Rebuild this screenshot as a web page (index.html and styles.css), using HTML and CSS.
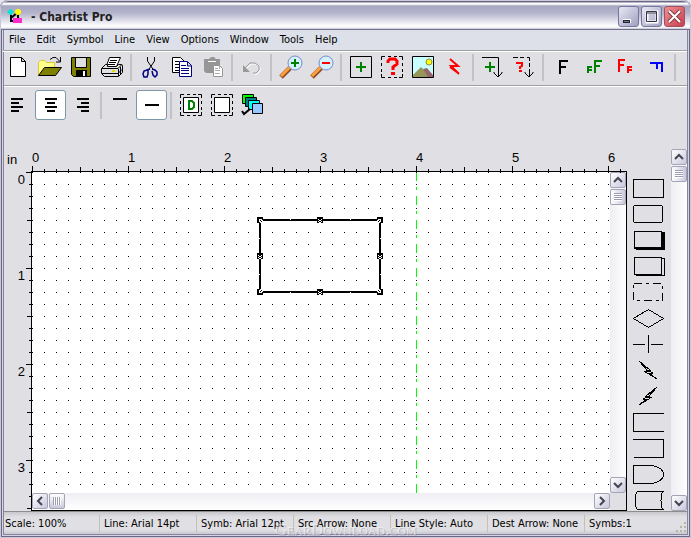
FILE: index.html
```html
<!DOCTYPE html>
<html lang="en">
<head>
    <meta charset="UTF-8">
    <meta name="viewport" content="width=device-width, initial-scale=1.0">
    <title>Chartist Pro</title>
    <link rel="stylesheet" href="styles.css">
</head>
<body>
    <div class="window">
        <header class="titlebar">
            <svg class="logo" width="16" height="16" viewBox="0 0 16 16">
                <path d="M4 6v6h4M4 9l6-5M11 5v5" stroke="#000" stroke-width="2" fill="none"/>
                <path d="M3 0h1l3 3-3 3H3L0 3z" fill="#00e6d2"/>
                <circle cx="11" cy="3" r="3" fill="#ff0"/>
                <rect x="6" y="9" width="9" height="5" fill="#ff28c8"/>
            </svg>
            <h1>- Chartist Pro</h1>
            <div class="window-buttons">
                <button aria-label="Minimize"><svg width="19" height="19"><path d="M4 12h8v4H4z" fill="#fff"/><path d="M4 13h7v3H4z" fill="#223"/><path d="M5 14h5v1H5z" fill="#778"/></svg></button>
                <button aria-label="Maximize"><svg width="19" height="19"><path d="M5 5h10v10H5z" fill="none" stroke="#fff" stroke-width="3"/><path d="M4.500 4.500h10v10h-10zM4 6h11" fill="none" stroke="#334"/></svg></button>
                <button class="close" aria-label="Close"><svg width="19" height="19"><path d="M4 4l11 11M15 4L4 15" stroke="#823c46" stroke-width="4"/><path d="M4 4l11 11M15 4L4 15" stroke="#fff" stroke-width="2"/></svg></button>
            </div>
        </header>
        <nav class="menu">
            <a href="#">File</a>
            <a href="#">Edit</a>
            <a href="#">Symbol</a>
            <a href="#">Line</a>
            <a href="#">View</a>
            <a href="#">Options</a>
            <a href="#">Window</a>
            <a href="#">Tools</a>
            <a href="#">Help</a>
        </nav>
        <div class="toolbar main-tools">
            <button aria-label="New"><svg width="24" height="24"><path d="M3.500 2.500h11l4 4v15h-15zM14.500 2.500v4h4" fill="#fff" stroke="#000"/></svg></button>
            <button aria-label="Open"><svg width="24" height="24"><path d="M.5 20.500v-13l2-2h4l2 2h8v5" fill="#ffff8c" stroke="#dcc832"/><path d="M.5 20.500l6-8h17l-6 8z" fill="#808000" stroke="#000"/><path d="M12 4.500l3-2h3l4 4M22.500 2v5H18" fill="none" stroke="#000"/></svg></button>
            <button aria-label="Save"><svg width="24" height="24"><path d="M2.500 2.500h19v19h-17l-2-2z" fill="#808000" stroke="#000"/><path d="M6.500 2.500h11v10h-11z" fill="#e0dfe3" stroke="#000"/><path d="M7 15h11v6H7z"/><path d="M14 16h2v5h-2z" fill="#fff"/></svg></button>
            <button aria-label="Print"><svg width="24" height="24"><path d="M6.500 10.500l3-8h11l-4 9" fill="#fff" stroke="#000"/><path d="M10 5.500h7M9 7.500h7M8 9.500h7" stroke="#000"/><path d="M1.500 13.500l4-4h2v2h9l2-2h3l1 1v7l-4 4h-14l-3-3z" fill="#e0dfe3" stroke="#000"/><path d="M2 13.500h16l4-4M2 18.500h16l4-4M18.500 14v7M20.500 12v7" fill="none" stroke="#000"/><path d="M12 16h3" stroke="#dcdc00" stroke-width="2"/></svg></button>
            <span class="divider"></span>
            <button aria-label="Cut"><svg width="24" height="24"><path d="M8.500 2v4l6 9M15.500 2v4l-6 9" fill="none" stroke="#000"/><path d="M11 14l-3 1-3 1-1 3 1 3h3l1-3v-4M13 14l3 1 2 2v3l-2 2-2-2-1-4" fill="none" stroke="#000080" stroke-width="1.500"/></svg></button>
            <button aria-label="Copy"><svg width="24" height="24"><path d="M2.500 2.500h8l4 4v11h-12z" fill="#fff" stroke="#000"/><path d="M5 6.500h4M5 9.500h4M5 12.500h4M5 15.500h4" stroke="#000"/><path d="M9.500 6.500h8l4 4v11h-12zM17.500 7v4h4" fill="#fff" stroke="#000080"/><path d="M11 10.500h5M11 13.500h8M11 15.500h8M11 18.500h8" stroke="#000080"/></svg></button>
            <button aria-label="Paste" disabled><svg width="24" height="24"><path d="M3 4h5l2-2h3l2 2h4v14H5l-2-2z" fill="#969696"/><path d="M7 6.500h8" stroke="#fff"/><path d="M12.500 10.500h6l3 3v8h-9z" fill="#fff" stroke="#969696"/><path d="M14 13.500h3M14 15.500h5M14 18.500h5M18.500 11v3" stroke="#aaa"/></svg></button>
            <span class="divider"></span>
            <button aria-label="Undo" disabled><svg width="24" height="24"><path d="M6 14l5-5h5l4 3v4l-3 3h-3" fill="none" stroke="#fff"/><path d="M5 13l5-5h5l4 3v4l-3 3h-3" fill="none" stroke="#999"/><path d="M3 10l7 7H3z" fill="#999"/></svg></button>
            <span class="divider"></span>
            <button aria-label="Zoom in"><svg width="24" height="24"><path d="M2 22l9-9" stroke="#8c5028" stroke-width="5"/><path d="M2 21l9-9" stroke="#ffa03c" stroke-width="3"/><circle cx="16" cy="8" r="7" fill="#d2f0ff" stroke="#788cc8"/><path d="M12 8h8M16 4v8" stroke="#008000" stroke-width="2"/></svg></button>
            <button aria-label="Zoom out"><svg width="24" height="24"><path d="M2 22l9-9" stroke="#8c5028" stroke-width="5"/><path d="M2 21l9-9" stroke="#ffa03c" stroke-width="3"/><circle cx="16" cy="8" r="7" fill="#d2f0ff" stroke="#788cc8"/><path d="M12 8h8" stroke="#f00" stroke-width="2"/></svg></button>
            <span class="divider"></span>
            <button aria-label="Add symbol"><svg width="24" height="24"><path d="M1.500 1.500h21v21h-21z" fill="none" stroke="#000"/><path d="M7 12h10M12 7v10" stroke="#008000" stroke-width="2"/></svg></button>
            <button aria-label="Select symbol"><svg width="24" height="24"><path d="M1.500 5V1.500H5M8 1.500h3M14 1.500h3M19 1.500h3.500V5M22.500 8v3M22.500 14v3M22.500 19v3.500H19M8 22.500h3M14 22.500h3M5 22.500H1.500V19M1.500 8v3M1.500 14v3" fill="none" stroke="#000"/><path d="M8 8V6l2-2h5l2 2v3l-4 3v3" fill="none" stroke="#f00" stroke-width="3"/><path d="M11 17h4v3h-4z" fill="#f00"/></svg></button>
            <button aria-label="Picture"><svg width="24" height="24"><path d="M1.500 1.500h21v21h-21z" fill="#c8ffff" stroke="#000"/><path d="M2 22v-2l8-8 5 5 3 5z" fill="#96965a"/><path d="M12 14l4-1 6 7v2h-5z" fill="#96646e"/><circle cx="18" cy="7" r="3" fill="#ff0" stroke="#8c8c50"/></svg></button>
            <button aria-label="Lightning"><svg width="24" height="24"><path d="M8 4l8 7H9l8 8M8 12l8 6" fill="none" stroke="#f00" stroke-width="2"/></svg></button>
            <span class="divider"></span>
            <button aria-label="Add line"><svg width="24" height="24"><path d="M1 2.500h16.500V22M13 17v1l4 4 4-4v-1" fill="none" stroke="#000"/><path d="M4 12h10M9 7v10" stroke="#008000" stroke-width="2"/></svg></button>
            <button aria-label="Select line"><svg width="24" height="24"><path d="M1 2.500h5M8 2.500h4M15 2.500h2.500V6M17.500 8v4M17.500 14v8M13 17v1l4 4 4-4v-1" fill="none" stroke="#000"/><path d="M5 9V8h5v3l-2 1v2M7 16h3" fill="none" stroke="#f00" stroke-width="2"/></svg></button>
            <span class="divider"></span>
            <button aria-label="Font"><svg width="24" height="24"><path d="M9 19V6h8M9 12h6" fill="none" stroke="#000" stroke-width="2"/></svg></button>
            <button aria-label="Larger font"><svg width="24" height="24"><path d="M13 18V6h7M13 11h5M6 18v-6h4M6 15h4" fill="none" stroke="#008000" stroke-width="2"/></svg></button>
            <button aria-label="Smaller font"><svg width="24" height="24"><path d="M6 17V5h6M6 10h5M15 18v-6h4M15 15h4" fill="none" stroke="#f00" stroke-width="2"/></svg></button>
            <button aria-label="Rotate font"><svg width="24" height="24"><path d="M6 8h12v9M13 8v6" fill="none" stroke="#00f" stroke-width="2"/></svg></button>
            <span class="divider"></span>
        </div>
        <div class="toolbar format-tools">
            <button aria-label="Align left"><svg width="24" height="24"><path d="M3 6h12M3 10h8M3 14h12M3 18h8" stroke="#000" stroke-width="2"/></svg></button>
            <button class="active" aria-label="Align center"><svg width="24" height="24"><path d="M6 6h12M8 10h8M6 14h12M8 18h8" stroke="#000" stroke-width="2"/></svg></button>
            <button aria-label="Align right"><svg width="24" height="24"><path d="M7 6h12M11 10h8M7 14h12M11 18h8" stroke="#000" stroke-width="2"/></svg></button>
            <span class="divider"></span>
            <button aria-label="Align top"><svg width="24" height="24"><path d="M4 6h14" stroke="#000" stroke-width="2"/></svg></button>
            <button class="active" aria-label="Align middle"><svg width="24" height="24"><path d="M5 12h14" stroke="#000" stroke-width="2"/></svg></button>
            <span class="divider"></span>
            <button aria-label="Default symbol"><svg width="24" height="24"><path d="M1.500 5V1.500H5M8 1.500h3M14 1.500h3M19 1.500h3.500V5M22.500 8v3M22.500 14v3M22.500 19v3.500H19M8 22.500h3M14 22.500h3M5 22.500H1.500V19M1.500 8v3M1.500 14v3" fill="none" stroke="#000"/><path d="M4.500 4.500h15v15h-15z" fill="#fff" stroke="#000"/><path d="M10 8h3l2 2v4l-2 2h-3z" fill="none" stroke="#008000" stroke-width="2"/></svg></button>
            <button aria-label="Blank symbol"><svg width="24" height="24"><path d="M1.500 5V1.500H5M8 1.500h3M14 1.500h3M19 1.500h3.500V5M22.500 8v3M22.500 14v3M22.500 19v3.500H19M8 22.500h3M14 22.500h3M5 22.500H1.500V19M1.500 8v3M1.500 14v3" fill="none" stroke="#000"/><path d="M4.500 4.500h15v15h-15z" fill="#fff" stroke="#000"/></svg></button>
            <button aria-label="Color scheme"><svg width="24" height="24"><g stroke="#000"><path d="M1.500 1.500h11v9h-11z" fill="#0f0"/><path d="M4.500 4.500h11v9h-11z" fill="#008080"/><path d="M7.500 7.500h11v9h-11z" fill="#0ff"/><path d="M11.500 10.500h10v10h-10z" fill="#96c8ff"/></g><path d="M1 18l2 3 6-5" fill="none" stroke="#000" stroke-width="2"/></svg></button>
        </div>
        <main class="workspace">
            <div class="sheet">
                <div class="unit">in</div>
                <div class="ruler-top">
                    <div class="numbers"><span>0</span><span>1</span><span>2</span><span>3</span><span>4</span><span>5</span><span>6</span></div>
                    <svg width="100%" height="7">
                        <pattern id="inch" width="96" height="7" patternUnits="userSpaceOnUse">
                            <path d="M.5 0v7M12.500 3v4M24.500 3v4M36.500 3v4M48.500 1v6M60.500 3v4M72.500 3v4M84.500 3v4" stroke="#000"/>
                        </pattern>
                        <rect width="100%" height="7" fill="url(#inch)"/>
                    </svg>
                </div>
                <div class="ruler-left">
                    <div class="numbers"><span>0</span><span>1</span><span>2</span><span>3</span></div>
                    <svg width="6" height="100%">
                        <pattern id="inch-down" width="6" height="96" patternUnits="userSpaceOnUse">
                            <path d="M0 .5h6M3 12.500h3M3 24.500h3M3 36.500h3M1 48.500h5M3 60.500h3M3 72.500h3M3 84.500h3" stroke="#000"/>
                        </pattern>
                        <rect width="6" height="100%" fill="url(#inch-down)"/>
                    </svg>
                </div>
                <div class="view">
                    <svg class="drawing" width="100%" height="100%" shape-rendering="crispEdges">
                        <defs>
                            <pattern id="dots" width="12" height="12" patternUnits="userSpaceOnUse">
                                <rect width="1" height="1"/>
                            </pattern>
                            <g id="corner">
                                <path d="M-3-3h6v2H0v1h-1v3h-2z"/>
                                <path d="M-1-1h4v4h-4z" fill="#fff"/>
                                <path d="M0 0h1v1H0zM1 1h1v1H1zM2-1h1v1H2zM-1 2h1v1h-1z"/>
                            </g>
                            <g id="middle">
                                <path d="M-3-3h6v6h-6z"/>
                                <path d="M-2-1h1v1h-1zM1-1h1v1H1zM-1 0h2v1h-2zM-2 1h1v1h-1zM1 1h1v1H1zM-1 2h2v1h-2z" fill="#fff"/>
                            </g>
                        </defs>
                        <rect width="100%" height="100%" fill="url(#dots)"/>
                        <path d="M384.500 0v2000" stroke="#0f0" stroke-dasharray="9 6 3 6"/>
                        <rect x="228" y="48" width="120" height="72" fill="none" stroke="#000" stroke-width="2"/>
                        <path d="M258.500 47v1M318.500 47v1M258.500 120v1M318.500 120v1M227 66.500h1M227 102.500h1M348 66.500h1M348 102.500h1" stroke="#fff"/>
                        <use href="#corner" x="228" y="48"/>
                        <use href="#corner" transform="translate(348 48) scale(-1 1)"/>
                        <use href="#corner" transform="translate(228 120) scale(1 -1)"/>
                        <use href="#corner" transform="translate(348 120) scale(-1 -1)"/>
                        <use href="#middle" x="288" y="48"/>
                        <use href="#middle" x="288" y="120"/>
                        <use href="#middle" x="228" y="84"/>
                        <use href="#middle" x="348" y="84"/>
                    </svg>
                    <div class="scroll down">
                        <button aria-label="Scroll up"><svg width="10" height="8"><path d="M1 6l4-4 4 4" fill="none" stroke="#445" stroke-width="2"/></svg></button>
                        <span class="thumb"></span>
                        <button class="end" aria-label="Scroll down"><svg width="10" height="8"><path d="M1 2l4 4 4-4" fill="none" stroke="#445" stroke-width="2"/></svg></button>
                    </div>
                    <div class="scroll across">
                        <button aria-label="Scroll left"><svg width="8" height="10"><path d="M6 1L2 5l4 4" fill="none" stroke="#445" stroke-width="2"/></svg></button>
                        <span class="thumb"></span>
                        <button class="end" aria-label="Scroll right"><svg width="8" height="10"><path d="M2 1l4 4-4 4" fill="none" stroke="#445" stroke-width="2"/></svg></button>
                    </div>
                </div>
            </div>
            <div class="palette">
                <button aria-label="Rectangle"><svg width="34" height="20"><path d="M1.500 1.500h30v18h-30z"/></svg></button>
                <button aria-label="Rounded rectangle"><svg width="34" height="20"><rect x="1.500" y="1.500" width="29" height="17" rx="2"/></svg></button>
                <button aria-label="Shadowed rectangle"><svg width="34" height="20"><path d="M2 1h28v1h3v18H4v-1H2z" fill="#000" stroke="none"/><path d="M3 2h26v15H3z" fill="#e0dfe3" stroke="none"/></svg></button>
                <button aria-label="Stacked rectangle"><svg width="34" height="20"><path d="M2.500 1.500h27v17h-27zM30 2.500h2.500v17h-28V18"/></svg></button>
                <button aria-label="Dashed rectangle"><svg width="34" height="20"><path d="M1.500 1.500h29v17h-29z" stroke-dasharray="8 4 3 4"/></svg></button>
                <button aria-label="Diamond"><svg width="34" height="20"><path d="M1.500 10.500l15-9 15 9-15 9z"/></svg></button>
                <button aria-label="Cross"><svg width="34" height="20"><path d="M1 10.500h12M19 10.500h12M16.500 1v18"/></svg></button>
                <button aria-label="Bolt down"><svg width="34" height="20"><path d="M7 1l11 9h-4l7 3h-4l8 6-13-8h4z"/></svg></button>
                <button aria-label="Bolt up"><svg width="34" height="20"><path d="M25 1l-11 9h4l-7 3h4l-8 6 13-8h-4z"/></svg></button>
                <button aria-label="Open right"><svg width="34" height="20"><path d="M32 1.500H1.500v18H32"/></svg></button>
                <button aria-label="Open left"><svg width="34" height="20"><path d="M1 1.500h30.500v18H2"/></svg></button>
                <button aria-label="Delay"><svg width="34" height="20"><path d="M1.500 1.500h17c7 0 13 4 13 9s-6 9-13 9h-17z"/></svg></button>
                <button aria-label="Storage"><svg width="34" height="20"><path d="M32 1.500H5.500c-3 3-3 15 0 18H32M30.500 2c-2 3-2 14 0 17"/></svg></button>
            </div>
            <div class="scroll down outer">
                <button aria-label="Palette up"><svg width="10" height="8"><path d="M1 6l4-4 4 4" fill="none" stroke="#445" stroke-width="2"/></svg></button>
                <span class="thumb"></span>
                <button class="end" aria-label="Palette down"><svg width="10" height="8"><path d="M1 2l4 4 4-4" fill="none" stroke="#445" stroke-width="2"/></svg></button>
            </div>
        </main>
        <footer class="status">
            <span>Scale: 100%</span>
            <span>Line: Arial 14pt</span>
            <span>Symb: Arial 12pt</span>
            <span>Src Arrow: None</span>
            <span>Line Style: Auto</span>
            <span>Dest Arrow: None</span>
            <span>Symbs:1</span>
            <svg class="grip" width="12" height="12"><path d="M9 1h2v2H9zM5 5h2v2H5zM9 5h2v2H9zM1 9h2v2H1zM5 9h2v2H5zM9 9h2v2H9z" fill="#b8b4a2"/></svg>
        </footer>
        <div class="watermark">GearDownload.com</div>
    </div>
</body>
</html>
```
FILE: styles.css
```css
* {
    box-sizing: border-box;
}
body {
    margin: 0;
    background-color: #e8e8f0;
    color: #000;
    font-family: "DejaVu Sans Condensed", "DejaVu Sans", sans-serif;
    font-size: 11px;
}
svg {
    display: block;
    flex-shrink: 0;
}
button {
    display: flex;
    align-items: center;
    justify-content: center;
    margin: 0;
    padding: 0;
    border: none;
    background: none;
}
.window {
    position: relative;
    display: flex;
    flex-direction: column;
    height: 100vh;
    min-height: 400px;
    padding: 0 4px 4px;
    border-radius: 8px 8px 0 0;
    background-color: #e0dfe3;
    box-shadow: inset 0 0 0 1px #c8c8d8, inset 0 0 0 2px #6c6884, inset 0 0 0 3px #d4d4e4, inset 0 0 0 4px #8884a0;
}

/* title bar and menu */
.titlebar {
    display: flex;
    align-items: center;
    flex-shrink: 0;
    height: 30px;
    margin: 0 -3px;
    padding: 3px 5px 0 6px;
    border-top: 1px solid #c8c8d8;
    border-bottom: 1px solid #74708c;
    border-radius: 8px 8px 0 0;
    background: linear-gradient(#6c6884 1px, #fff 2px, #fff 3px, #a6a6c2 5px, #b4b4cc 12px, #f8f8fc 24px, #fff 26px, #c4c4d8 28px);
}
.titlebar h1 {
    flex: 1;
    margin: 0 0 0 8px;
    color: #222;
    font-size: 12px;
}
.window-buttons {
    display: flex;
    gap: 2px;
}
.window-buttons button {
    width: 21px;
    height: 21px;
    border: 1px solid #74789c;
    border-radius: 3px;
    background: linear-gradient(135deg, #e8e8f4, #a0a0c0);
}
.window-buttons .close {
    border-color: #a05060;
    background: linear-gradient(135deg, #f09090, #c84050);
}
.menu {
    display: flex;
    align-items: center;
    flex-shrink: 0;
    gap: 11px;
    height: 20px;
    padding: 0 5px 2px;
    background-color: #dde0e9;
}
.menu a {
    color: #000;
    text-decoration: none;
}

/* toolbars */
.toolbar {
    display: flex;
    align-items: center;
    flex-shrink: 0;
    height: 35px;
    border-top: 1px solid #a0a0a0;
    box-shadow: inset 0 1px #fff;
}
.toolbar button {
    width: 31px;
    height: 30px;
    border-radius: 3px;
}
.toolbar .active {
    border: 1px solid #7c98a8;
    background-color: #fff;
}
.toolbar .divider {
    width: 2px;
    height: 27px;
    margin: 0 3px;
    background-color: #c2c1c6;
}
.main-tools {
    margin-left: -1px;
    padding-bottom: 2px;
}
.format-tools {
    height: 39px;
}

/* drawing area */
.workspace {
    display: flex;
    flex: 1;
    min-height: 0;
}
.sheet {
    display: grid;
    grid-template-columns: 27px minmax(0, 1fr);
    grid-template-rows: 47px minmax(0, 1fr);
    flex: 1;
    min-width: 0;
    font-family: "Liberation Sans", sans-serif;
    font-size: 13px;
    line-height: 16px;
}
.unit {
    padding: 28px 0 0 3px;
}
.ruler-top {
    position: relative;
    display: flex;
    flex-direction: column;
    justify-content: flex-end;
    margin-bottom: -2px;
    padding-left: 1px;
}
.ruler-top .numbers {
    display: flex;
    overflow: hidden;
}
.ruler-top .numbers span {
    flex: 0 0 96px;
}
.ruler-left {
    position: relative;
    display: flex;
    justify-content: flex-end;
    margin-right: -1px;
    padding-top: 1px;
}
.ruler-left .numbers {
    overflow: hidden;
    padding-right: 1px;
}
.ruler-left .numbers span {
    display: block;
    height: 96px;
}
.view {
    display: grid;
    grid-template-columns: minmax(0, 1fr) 16px;
    grid-template-rows: minmax(0, 1fr) 17px;
    border: 1px solid #000;
}
.drawing {
    background-color: #fff;
}

/* scroll bars */
.scroll {
    display: flex;
    gap: 1px;
    background: linear-gradient(90deg, #eeeef4, #fff);
}
.scroll.down {
    flex-direction: column;
}
.scroll.across {
    background: linear-gradient(#eeeef4, #fff);
}
.scroll button,
.thumb {
    width: 16px;
    height: 16px;
    border: 1px solid #a4a4b8;
    border-radius: 2px;
    background: linear-gradient(135deg, #fff, #c8c8dc);
}
.scroll .end {
    margin-top: auto;
}
.across .end {
    margin: 0 0 0 auto;
}
.thumb {
    padding: 3px;
    background: repeating-linear-gradient(#9c9cb0 0 1px, #fff 1px 2px) content-box, linear-gradient(90deg, #fff, #c8c8dc);
}
.across .thumb {
    background: repeating-linear-gradient(90deg, #9c9cb0 0 1px, #fff 1px 2px) content-box, linear-gradient(#fff, #c8c8dc);
}
.palette {
    display: flex;
    flex-direction: column;
    gap: 6px;
    width: 44px;
    padding: 54px 0 0 5px;
    overflow: hidden;
}
.palette button {
    justify-content: flex-start;
}
.palette svg {
    fill: none;
    stroke: #000;
    shape-rendering: crispEdges;
}
.outer {
    margin-top: 25px;
}

/* status bar */
.status {
    position: relative;
    display: flex;
    align-items: center;
    flex-shrink: 0;
    height: 23px;
    border-top: 1px solid #8c8c8c;
    background: linear-gradient(#c8c8cc, #e0dfe3 5px, #e0dfe3 18px, #c8c8d0);
}
.status span {
    width: 97px;
    padding-left: 4px;
    border-left: 1px solid #c4c1b2;
    line-height: 17px;
    white-space: nowrap;
}
.status span:first-child {
    width: 95px;
    padding-left: 1px;
    border-left: none;
}
.grip {
    position: absolute;
    right: 0;
    bottom: 1px;
}
.watermark {
    position: absolute;
    right: 0;
    bottom: 1px;
    left: 0;
    color: rgba(255, 255, 255, 0.5);
    font-family: "Liberation Serif", serif;
    font-size: 17px;
    font-variant: small-caps;
    line-height: 14px;
    text-align: center;
    text-shadow: 1px 1px rgba(100, 100, 110, 0.3);
    pointer-events: none;
}
```
